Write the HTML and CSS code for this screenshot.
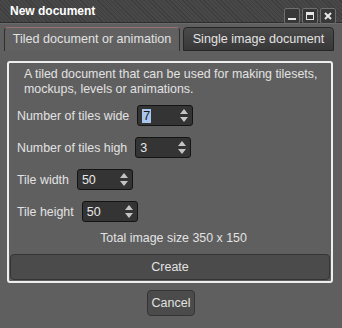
FILE: index.html
```html
<!DOCTYPE html>
<html lang="en">
<head>
    <meta charset="UTF-8">
    <title>New document</title>
    <link rel="stylesheet" href="styles.css">
</head>
<body>
    <div class="window">
        <!-- Barra de titulo -->
        <div class="titlebar">
            <span class="title">New document</span>
            <div class="win-buttons">
                <div class="win-btn"><span class="ico-min"></span></div>
                <div class="win-btn"><span class="ico-max"></span></div>
                <div class="win-btn">
                    <svg width="8" height="8" viewBox="0 0 8 8"><path d="M1 1L7 7M7 1L1 7" stroke="#e8e8e8" stroke-width="2"/></svg>
                </div>
            </div>
        </div>

        <!-- Pestañas -->
        <div class="tabs">
            <div class="tab active">Tiled document or animation</div>
            <div class="tab">Single image document</div>
        </div>

        <div class="panel">
            <p class="desc">A tiled document that can be used for making tilesets,<br>mockups, levels or animations.</p>

            <div class="row">
                <span class="label">Number of tiles wide</span>
                <div class="spin"><span class="value"><span class="sel">7</span></span><span class="arrows"><i class="up"></i><i class="down"></i></span></div>
            </div>
            <div class="row">
                <span class="label">Number of tiles high</span>
                <div class="spin"><span class="value">3</span><span class="arrows"><i class="up"></i><i class="down"></i></span></div>
            </div>
            <div class="row">
                <span class="label">Tile width</span>
                <div class="spin"><span class="value">50</span><span class="arrows"><i class="up"></i><i class="down"></i></span></div>
            </div>
            <div class="row">
                <span class="label">Tile height</span>
                <div class="spin"><span class="value">50</span><span class="arrows"><i class="up"></i><i class="down"></i></span></div>
            </div>

            <p class="total">Total image size 350 x 150</p>
            <button class="btn create">Create</button>
        </div>

        <div class="footer">
            <button class="btn cancel">Cancel</button>
        </div>
    </div>
</body>
</html>
```

FILE: styles.css
```css
body {
    margin: 0;
    background-color: #5f5f5f;
    font-family: "Liberation Sans", Arial, sans-serif;
    font-size: 12.4px;
    color: #e2e2e2;
}
.window {
    width: 342px;
    height: 328px;
    overflow: hidden;
}

/* Barra de titulo */
.titlebar {
    height: 22px;
    display: flex;
    align-items: center;
    justify-content: space-between;
    padding: 0 6px 0 10px;
    background: repeating-linear-gradient(45deg, #3e3e3e 0 1px, #484848 1px 3px);
    border-bottom: 1px solid #2e2e2e;
    box-shadow: 0 1px 0 #6a6a6a;
}
.title {
    font-weight: bold;
    font-size: 12px;
    color: #ffffff;
}
.win-buttons {
    display: flex;
    gap: 2px;
    margin-top: 9px;
}
.win-btn {
    width: 14px;
    height: 14px;
    background-color: #383838;
    border: 1px solid #6e6e6e;
    border-radius: 2px;
    display: flex;
    align-items: center;
    justify-content: center;
}
.ico-min {
    width: 8px;
    height: 2px;
    background-color: #e8e8e8;
    margin-top: 6px;
}
.ico-max {
    width: 6px;
    height: 4px;
    border: 1px solid #e8e8e8;
    border-top-width: 3px;
}

/* Pestañas */
.tabs {
    display: flex;
    gap: 3px;
    padding: 4px 0 0 4px;
}
.tab {
    height: 22px;
    line-height: 22px;
    font-size: 12.6px;
    border-radius: 4px 4px 0 0;
    box-sizing: content-box;
}
.tab.active {
    width: 174px;
    border: 1px solid #2f2f2f;
    border-top-color: #9a7070;
    border-bottom: none;
    background-color: #616161;
    text-align: center;
    padding-bottom: 1px;
}
.tab:not(.active) {
    width: 149px;
    border: 1px solid #262626;
    background: linear-gradient(#4a4a4a, #383838);
    text-align: center;
}

/* Panel */
.panel {
    margin: 10px 9px 0 7px;
    border: 2px solid #eeeeee;
    border-radius: 3px;
    padding: 4px 1px 1px 8px;
}
.desc {
    margin: 0 0 8px 7px;
    line-height: 15px;
}
.row {
    display: flex;
    align-items: center;
    gap: 8px;
    margin-bottom: 11px;
}
.spin {
    width: 54px;
    height: 19px;
    background-color: #343434;
    border: 1px solid #141414;
    border-radius: 3px;
    display: flex;
    align-items: center;
    justify-content: space-between;
}
.value {
    padding-left: 4px;
    font-size: 12.5px;
    color: #e8e8e8;
}
.sel {
    background-color: #a9c7ee;
    color: #1a1a1a;
    padding: 0 1px;
}
.arrows {
    display: flex;
    flex-direction: column;
    gap: 3px;
    margin-right: 4px;
}
.arrows i {
    width: 0;
    height: 0;
    border-left: 4px solid transparent;
    border-right: 4px solid transparent;
}
.arrows .up {
    border-bottom: 5px solid #c4c4c4;
}
.arrows .down {
    border-top: 5px solid #c4c4c4;
}
.total {
    margin: -2px 0 9px;
    text-align: center;
}
.btn {
    font-family: "Liberation Sans", Arial, sans-serif;
    font-size: 12.5px;
    color: #e2e2e2;
    background-color: #4b4b4b;
    border: 1px solid #343434;
    border-radius: 4px;
    height: 26px;
}
.create {
    display: block;
    width: 320px;
    margin-left: -7px;
}
.footer {
    display: flex;
    justify-content: center;
    padding-top: 7px;
}
.cancel {
    width: 48px;
    padding: 0;
}
```
